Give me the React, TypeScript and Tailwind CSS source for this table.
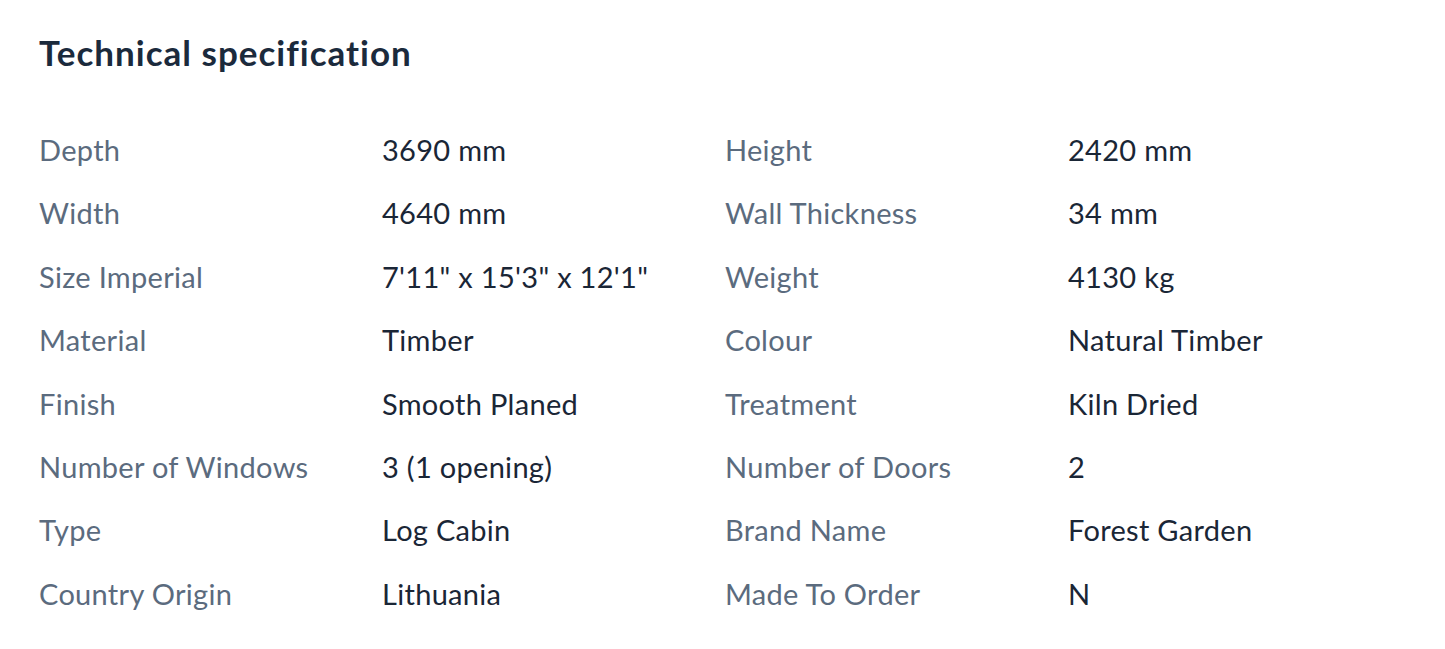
const ROWS: [string, string, string, string][] = [
  ["Depth", "3690 mm", "Height", "2420 mm"],
  ["Width", "4640 mm", "Wall Thickness", "34 mm"],
  ["Size Imperial", "7'11\" x 15'3\" x 12'1\"", "Weight", "4130 kg"],
  ["Material", "Timber", "Colour", "Natural Timber"],
  ["Finish", "Smooth Planed", "Treatment", "Kiln Dried"],
  ["Number of Windows", "3 (1 opening)", "Number of Doors", "2"],
  ["Type", "Log Cabin", "Brand Name", "Forest Garden"],
  ["Country Origin", "Lithuania", "Made To Order", "N"],
];

export default function App() {
  return (
    <div
      className="min-h-screen bg-white pl-[39px] pt-[28px]"
      style={{ fontFamily: "Lato, 'Noto Sans', sans-serif" }}
    >
      <h2 className="text-[35px] font-bold leading-[48px] tracking-[1px] text-[#1b2a3c]">
        Technical specification
      </h2>
      <div className="mt-[42px] grid grid-cols-[343px_343px_343px_343px] text-[29px] tracking-[0.3px]">
        {ROWS.map((r, i) => (
          <div key={i} className="contents">
            <div className="flex h-[63.4px] items-center text-[#5b6b7e]">{r[0]}</div>
            <div className="flex h-[63.4px] items-center text-[#1a2636]">{r[1]}</div>
            <div className="flex h-[63.4px] items-center text-[#5b6b7e]">{r[2]}</div>
            <div className="flex h-[63.4px] items-center text-[#1a2636]">{r[3]}</div>
          </div>
        ))}
      </div>
    </div>
  );
}
